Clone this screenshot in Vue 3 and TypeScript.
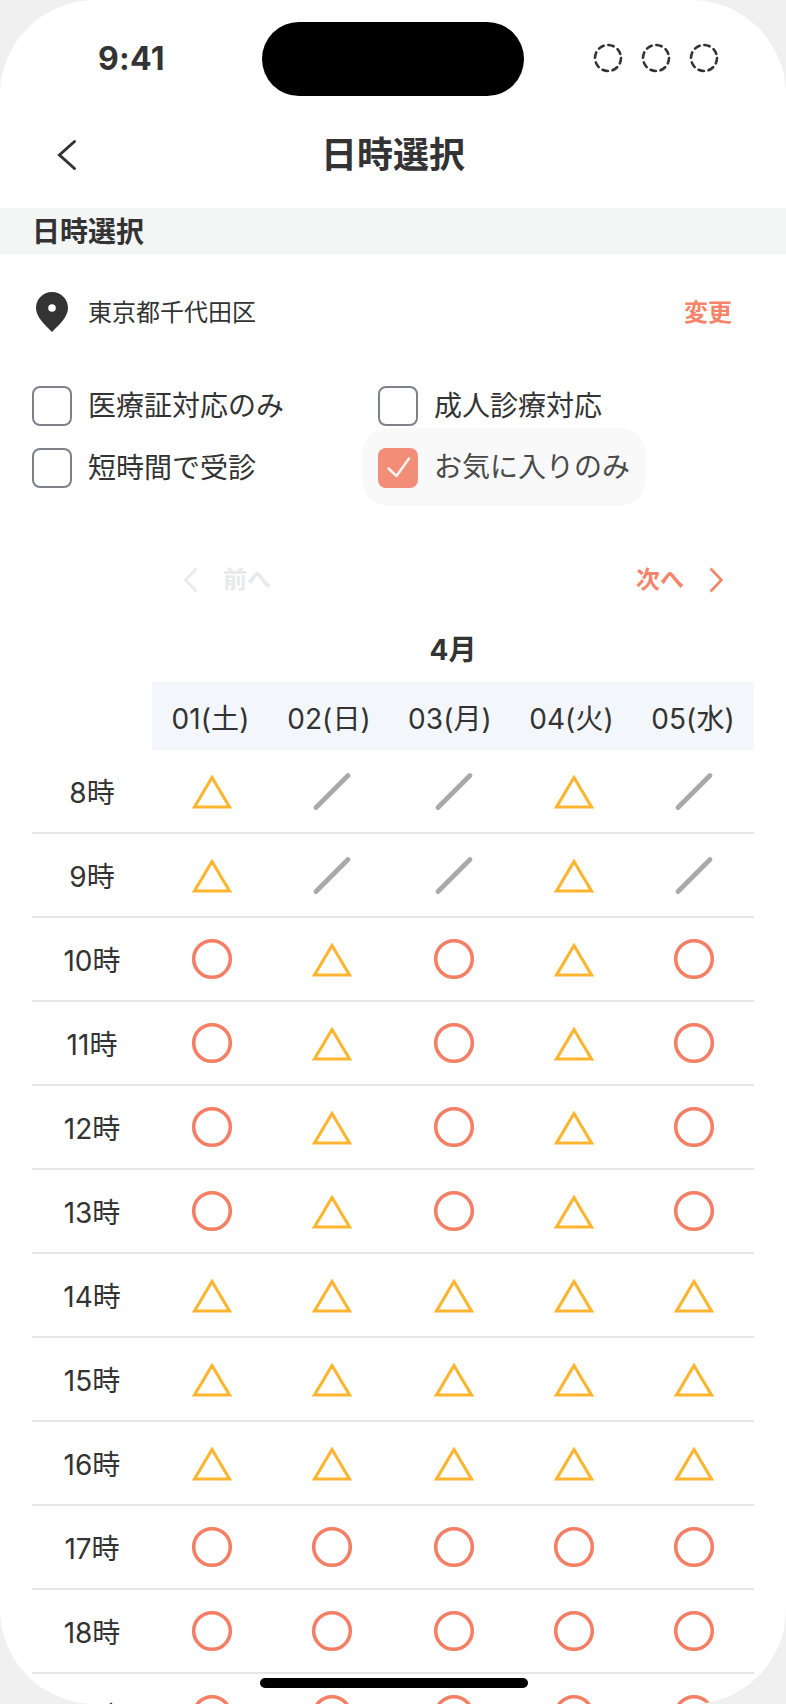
<script setup lang="ts">
type Mark = 'c' | 't' | 's'

const days = ['01(土)', '02(日)', '03(月)', '04(火)', '05(水)']

const slotRows: { label: string; marks: Mark[] }[] = [
  { label: '8時', marks: ['t', 's', 's', 't', 's'] },
  { label: '9時', marks: ['t', 's', 's', 't', 's'] },
  { label: '10時', marks: ['c', 't', 'c', 't', 'c'] },
  { label: '11時', marks: ['c', 't', 'c', 't', 'c'] },
  { label: '12時', marks: ['c', 't', 'c', 't', 'c'] },
  { label: '13時', marks: ['c', 't', 'c', 't', 'c'] },
  { label: '14時', marks: ['t', 't', 't', 't', 't'] },
  { label: '15時', marks: ['t', 't', 't', 't', 't'] },
  { label: '16時', marks: ['t', 't', 't', 't', 't'] },
  { label: '17時', marks: ['c', 'c', 'c', 'c', 'c'] },
  { label: '18時', marks: ['c', 'c', 'c', 'c', 'c'] },
  { label: '19時', marks: ['c', 'c', 'c', 'c', 'c'] },
]

const filters = [
  { label: '医療証対応のみ', checked: false },
  { label: '成人診療対応', checked: false },
  { label: '短時間で受診', checked: false },
  { label: 'お気に入りのみ', checked: true },
]
</script>

<template>
  <div class="phone">
    <div class="island"></div>
    <div class="home-bar"></div>

    <div class="status">
      <span class="time">9:41</span>
      <div class="status-icons">
        <svg v-for="n in 3" :key="n" width="30" height="30" viewBox="0 0 30 30">
          <circle cx="15" cy="15" r="13" fill="none" stroke="#333" stroke-width="2.6" stroke-linecap="round" stroke-dasharray="5.5 4.7" />
        </svg>
      </div>
    </div>

    <header class="nav">
      <svg class="back" width="20" height="32" viewBox="0 0 20 32">
        <path d="M17.5 2.5L2.5 16L17.5 29.5" fill="none" stroke="#333" stroke-width="3" stroke-linecap="round" stroke-linejoin="miter" />
      </svg>
      <h1 class="title">日時選択</h1>
    </header>

    <div class="section-bar">日時選択</div>

    <div class="location">
      <svg width="32" height="40" viewBox="0 0 32 40">
        <path fill-rule="evenodd" fill="#333" d="M16 0C7 0 0 7 0 16C0 25 9 33 16 40C23 33 32 25 32 16C32 7 25 0 16 0ZM16 12.2A3.8 3.8 0 1 1 16 19.8A3.8 3.8 0 1 1 16 12.2Z" />
      </svg>
      <span class="location-name">東京都千代田区</span>
      <span class="change">変更</span>
    </div>

    <div class="filters">
      <div v-for="f in filters" :key="f.label" class="filter" :class="{ active: f.checked }">
        <span class="box" :class="{ checked: f.checked }">
          <svg v-if="f.checked" width="40" height="40" viewBox="0 0 40 40">
            <path d="M10.5 20.5L18.5 28L31 10.5" fill="none" stroke="#fff4ef" stroke-width="2.5" stroke-linecap="round" stroke-linejoin="round" />
          </svg>
        </span>
        <span class="filter-label">{{ f.label }}</span>
      </div>
    </div>

    <div class="pager">
      <div class="pager-link disabled">
        <svg width="14" height="26" viewBox="0 0 14 26">
          <path d="M12.5 1.5L1.5 13L12.5 24.5" fill="none" stroke="currentColor" stroke-width="2.6" />
        </svg>
        <span>前へ</span>
      </div>
      <div class="pager-link next">
        <span>次へ</span>
        <svg width="14" height="26" viewBox="0 0 14 26">
          <path d="M1.5 1.5L12.5 13L1.5 24.5" fill="none" stroke="currentColor" stroke-width="2.6" />
        </svg>
      </div>
    </div>

    <div class="month">4月</div>

    <div class="days">
      <div v-for="d in days" :key="d" class="day">{{ d }}</div>
    </div>

    <div v-for="row in slotRows" :key="row.label" class="slot-row">
      <div class="slot-label">{{ row.label }}</div>
      <div v-for="(m, i) in row.marks" :key="i" class="slot">
        <svg width="44" height="44" viewBox="0 0 44 44">
          <circle v-if="m === 'c'" cx="22" cy="22" r="18.3" fill="none" stroke="#f47f65" stroke-width="3.6" />
          <path v-else-if="m === 't'" d="M22 8.5L4.5 38H39.5Z" fill="none" stroke="#fdb52f" stroke-width="3.1" />
          <path v-else d="M6 38.5L38 6.5" fill="none" stroke="#a9a9a9" stroke-width="4.8" stroke-linecap="round" />
        </svg>
      </div>
    </div>
  </div>
</template>

<style scoped>
.phone {
  position: relative;
  width: 786px;
  height: 1704px;
  overflow: hidden;
  background: #fff;
  border-radius: 95px;
  color: #333;
  font-family: Inter, "Noto Sans CJK JP", sans-serif;
}
.island {
  position: absolute;
  left: 262px;
  top: 22px;
  width: 262px;
  height: 74px;
  border-radius: 37px;
  background: #000;
}
.home-bar {
  position: absolute;
  z-index: 2;
  left: 260px;
  top: 1678px;
  width: 268px;
  height: 10px;
  border-radius: 5px;
  background: #000;
}
.status {
  height: 74px;
  padding-top: 22px;
  padding-left: 98px;
  padding-right: 67px;
  display: flex;
  align-items: center;
  justify-content: space-between;
}
.time {
  font-size: 32px;
  font-weight: 700;
  letter-spacing: 0.3px;
  line-height: 1;
  margin-top: -1px;
}
.status-icons {
  display: flex;
  gap: 18px;
  margin-top: -3px;
}
.nav {
  position: relative;
  height: 106px;
  padding-top: 6px;
  display: flex;
  align-items: center;
  justify-content: center;
}
.back {
  position: absolute;
  left: 57px;
  top: 43px;
}
.title {
  margin: 0;
  font-size: 36px;
  font-weight: 700;
  line-height: 1;
}
.section-bar {
  height: 46px;
  padding-left: 32px;
  background: #f4f6f6;
  font-size: 28px;
  font-weight: 700;
  line-height: 48px;
}
.location {
  margin: 38px 54px 0 36px;
  height: 40px;
  display: flex;
  align-items: center;
}
.location-name {
  margin-left: 20px;
  padding-top: 2px;
  font-size: 24px;
  line-height: 40px;
}
.change {
  margin-left: auto;
  padding-top: 2px;
  font-size: 24px;
  font-weight: 700;
  line-height: 40px;
  color: #f4846a;
}
.filters {
  margin: 54px 0 0 32px;
  display: grid;
  grid-template-columns: 346px 1fr;
  row-gap: 22px;
}
.filter {
  justify-self: start;
  display: flex;
  align-items: center;
  gap: 16px;
  height: 40px;
  padding: 19px 16px;
  margin: -19px -16px;
  border-radius: 26px;
}
.filter.active {
  background: #f9f9f9;
  transform: translateY(-1px);
}
.filter.active .box {
  transform: translateY(1px);
}
.box {
  box-sizing: border-box;
  width: 40px;
  height: 40px;
  flex: none;
  border: 2px solid #7c818c;
  border-radius: 8px;
  background: #fff;
}
.box.checked {
  border: 0;
  background: #f28d78;
}
.box svg {
  display: block;
}
.filter-label {
  font-size: 28px;
  line-height: 40px;
  white-space: nowrap;
}
.filter.active .filter-label {
  color: #4a4a4a;
}
.pager {
  margin: 80px 63px 0 184px;
  height: 24px;
  display: flex;
  align-items: center;
  justify-content: space-between;
}
.pager-link {
  display: flex;
  align-items: center;
  gap: 25px;
  font-size: 24px;
  font-weight: 700;
  line-height: 24px;
}
.pager-link.disabled {
  color: #e8e9eb;
}
.pager-link.next {
  color: #f4846a;
}
.month {
  margin: 38px 32px 0 152px;
  height: 40px;
  text-align: center;
  font-size: 28px;
  font-weight: 700;
  line-height: 40px;
}
.days {
  margin: 12px 32px 0 152px;
  height: 68px;
  display: grid;
  grid-template-columns: 117px 120px 122px 121px 122px;
  background: #f3f6fa;
}
.day {
  text-align: center;
  font-size: 28px;
  letter-spacing: 0.1px;
  line-height: 74px;
  white-space: nowrap;
}
.slot-row {
  box-sizing: border-box;
  margin: 0 32px;
  height: 84px;
  display: grid;
  grid-template-columns: 122px 116px 124px 120px 120px 120px;
  align-items: center;
  border-bottom: 2px solid #e4e4ea;
}
.slot-label {
  padding-top: 4px;
  padding-right: 2px;
  text-align: center;
  font-size: 28px;
  line-height: 38px;
}
.slot {
  display: flex;
  justify-content: center;
}
.slot svg {
  display: block;
}
</style>

<style>
html,
body {
  margin: 0;
  background: #f0f0f0;
}
</style>
